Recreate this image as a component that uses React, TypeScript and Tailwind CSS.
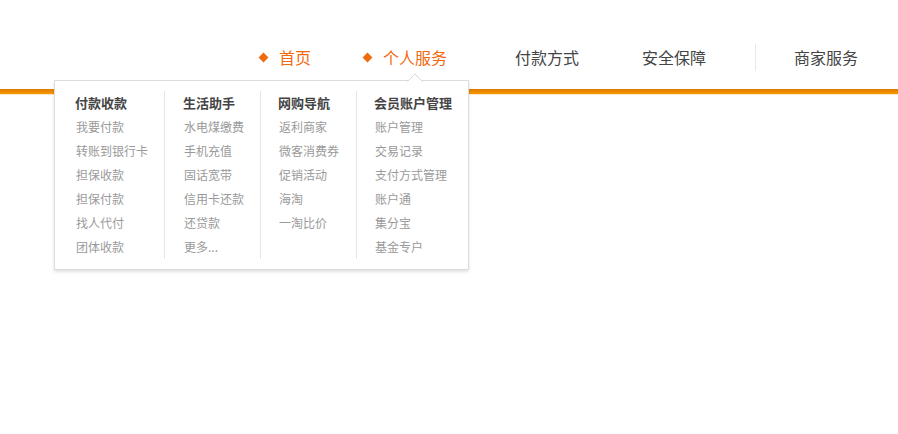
import React from "react";

const font = { fontFamily: '"Noto Sans CJK SC", "Noto Sans", sans-serif' };

const columns = [
  { title: "付款收款", items: ["我要付款", "转账到银行卡", "担保收款", "担保付款", "找人代付", "团体收款"], w: "w-[109px] pl-[20px]" },
  { title: "生活助手", items: ["水电煤缴费", "手机充值", "固话宽带", "信用卡还款", "还贷款", "更多..."], w: "w-[96px] pl-[18px] border-l border-[#e6e6e6]" },
  { title: "网购导航", items: ["返利商家", "微客消费券", "促销活动", "海淘", "一淘比价"], w: "w-[96px] pl-[17px] border-l border-[#e6e6e6]" },
  { title: "会员账户管理", items: ["账户管理", "交易记录", "支付方式管理", "账户通", "集分宝", "基金专户"], w: "flex-1 pl-[17px] border-l border-[#e6e6e6]" },
];

function Diamond() {
  return <span className="inline-block w-[7px] h-[7px] rotate-45 bg-[#f26a10] mr-[12px]" />;
}

export default function App() {
  return (
    <div className="relative min-h-[434px] w-full bg-white" style={font}>
      <header className="h-[89px] bg-white">
        <nav className="flex items-center pt-[44px] h-[71px] text-[16px] leading-[27px] text-[#444]">
          <div className="flex items-center ml-[260px] text-[#f26a10]">
            <Diamond />
            <span>首页</span>
          </div>
          <div className="flex items-center ml-[53px] text-[#f26a10]">
            <Diamond />
            <span>个人服务</span>
          </div>
          <span className="ml-[68px]">付款方式</span>
          <span className="ml-[63px]">安全保障</span>
          <span className="ml-[49px] w-px h-[27px] bg-[#e8e8e8]" />
          <span className="ml-[38px]">商家服务</span>
        </nav>
      </header>
      <div className="h-[5px] bg-gradient-to-b from-[#df7a00] to-[#f79800]" />
      <div className="h-px bg-[#fde9c6]" />

      <div className="absolute left-[54px] top-[80px] w-[415px] bg-white border border-[#dcdcdc] shadow-[0_2px_3px_rgba(0,0,0,0.12)]">
        <svg className="absolute -top-[8px] left-[352px]" width="16" height="9" viewBox="0 0 16 9">
          <polygon points="0.5,8.5 8,1 15.5,8.5" fill="#ffffff" />
          <polyline points="0.5,8.5 8,1 15.5,8.5" fill="none" stroke="#d6d6d6" strokeWidth="1" />
        </svg>
        <div className="flex py-[10px]">
          {columns.map((c) => (
            <div key={c.title} className={`${c.w} flex flex-col`}>
              <div className="h-[24px] leading-[24px] text-[13px] font-bold text-[#444]">{c.title}</div>
              {c.items.map((it) => (
                <div key={it} className="h-[24px] leading-[24px] text-[12px] text-[#9a9a9a] pl-px">
                  {it}
                </div>
              ))}
              {c.items.length < 6 && <div className="flex-1" />}
            </div>
          ))}
        </div>
      </div>
    </div>
  );
}
